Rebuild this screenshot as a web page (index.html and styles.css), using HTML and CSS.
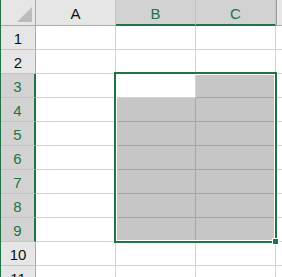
FILE: index.html
```html
<!DOCTYPE html>
<html lang="en">

<head>
    <meta charset="UTF-8">
    <meta name="viewport" content="width=device-width, initial-scale=1.0">
    <title>Sheet</title>
    <link rel="stylesheet" href="styles.css">
</head>

<body>
    <div class="sheet">
        <div class="grid">
            <div class="corner"><span class="tri"></span></div>
            <div class="colhead">A</div>
            <div class="colhead sel">B</div>
            <div class="colhead sel">C</div>
            <div class="colhead rest"></div>

            <div class="rowhead">1</div>
            <div class="cell"></div><div class="cell"></div><div class="cell"></div><div class="cell rest"></div>

            <div class="rowhead">2</div>
            <div class="cell"></div><div class="cell"></div><div class="cell"></div><div class="cell rest"></div>

            <div class="rowhead sel">3</div>
            <div class="cell"></div><div class="cell active"></div><div class="cell fill"></div><div class="cell rest"></div>

            <div class="rowhead sel">4</div>
            <div class="cell"></div><div class="cell fill"></div><div class="cell fill"></div><div class="cell rest"></div>

            <div class="rowhead sel">5</div>
            <div class="cell"></div><div class="cell fill"></div><div class="cell fill"></div><div class="cell rest"></div>

            <div class="rowhead sel">6</div>
            <div class="cell"></div><div class="cell fill"></div><div class="cell fill"></div><div class="cell rest"></div>

            <div class="rowhead sel">7</div>
            <div class="cell"></div><div class="cell fill"></div><div class="cell fill"></div><div class="cell rest"></div>

            <div class="rowhead sel">8</div>
            <div class="cell"></div><div class="cell fill"></div><div class="cell fill"></div><div class="cell rest"></div>

            <div class="rowhead sel">9</div>
            <div class="cell"></div><div class="cell fill"></div><div class="cell fill"></div><div class="cell rest"></div>

            <div class="rowhead">10</div>
            <div class="cell"></div><div class="cell"></div><div class="cell"></div><div class="cell rest"></div>

            <div class="rowhead">11</div>
            <div class="cell"></div><div class="cell"></div><div class="cell"></div><div class="cell rest"></div>
        </div>

        <!-- selection box over B3:C9 -->
        <div class="selection"></div>
        <div class="handle"></div>
    </div>
</body>

</html>
```

FILE: styles.css
```css
:root {
    --green: #217346;
    --head-bg: #e6e6e6;
    --head-sel-bg: #d2d2d2;
    --head-line: #c4c4c4;
    --head-edge: #ababab;
    --grid-line: #d4d4d4;
    --fill-bg: #c6c6c6;
    --fill-line: #a6a6a6;
}

* {
    box-sizing: border-box;
}

body {
    margin: 0;
    overflow: hidden;
    background: #fff;
    font-family: "Liberation Sans", Arial, sans-serif;
    font-size: 15px;
    color: #111;
}

.sheet {
    position: relative;
    height: 277px;
    border-left: 1px solid var(--green);
    overflow: hidden;
}

.grid {
    display: grid;
    grid-template-columns: 35px 80px 80px 80px 1fr;
    grid-template-rows: 26px repeat(11, 24px);
}

.corner {
    position: relative;
    background: var(--head-bg);
    border-right: 1px solid var(--head-edge);
    border-bottom: 1px solid var(--head-edge);
}

.tri {
    position: absolute;
    right: 3px;
    bottom: 3px;
    width: 0;
    height: 0;
    border-left: 15px solid transparent;
    border-bottom: 15px solid #bcbcbc;
}

.colhead {
    display: flex;
    align-items: center;
    justify-content: center;
    padding-top: 2px;
    background: var(--head-bg);
    border-right: 1px solid var(--head-line);
    border-bottom: 1px solid var(--head-edge);
}

.colhead.sel {
    background: var(--head-sel-bg);
    color: var(--green);
    border-bottom: 2px solid var(--green);
}

.colhead.sel + .colhead.rest {
    border-left: 1px solid #9e9e9e;
}

.colhead.rest {
    border-right: none;
}

.rowhead {
    display: flex;
    align-items: center;
    justify-content: center;
    padding-top: 1px;
    background: var(--head-bg);
    border-right: 1px solid var(--head-edge);
    border-bottom: 1px solid var(--head-line);
}

.rowhead.sel {
    background: var(--head-sel-bg);
    color: var(--green);
    border-right: 2px solid var(--green);
}

.cell {
    border-right: 1px solid var(--grid-line);
    border-bottom: 1px solid var(--grid-line);
}

.cell.rest {
    border-right: none;
}

.cell.fill {
    background: var(--fill-bg);
    border-color: var(--fill-line);
}

.selection {
    position: absolute;
    left: 113px;
    top: 72px;
    width: 163px;
    height: 171px;
    border: 2px solid var(--green);
    box-shadow: inset 0 0 0 1px #fff;
}

.handle {
    position: absolute;
    left: 271px;
    top: 238px;
    width: 7px;
    height: 7px;
    background: var(--green);
    border: 1px solid #fff;
}
```
